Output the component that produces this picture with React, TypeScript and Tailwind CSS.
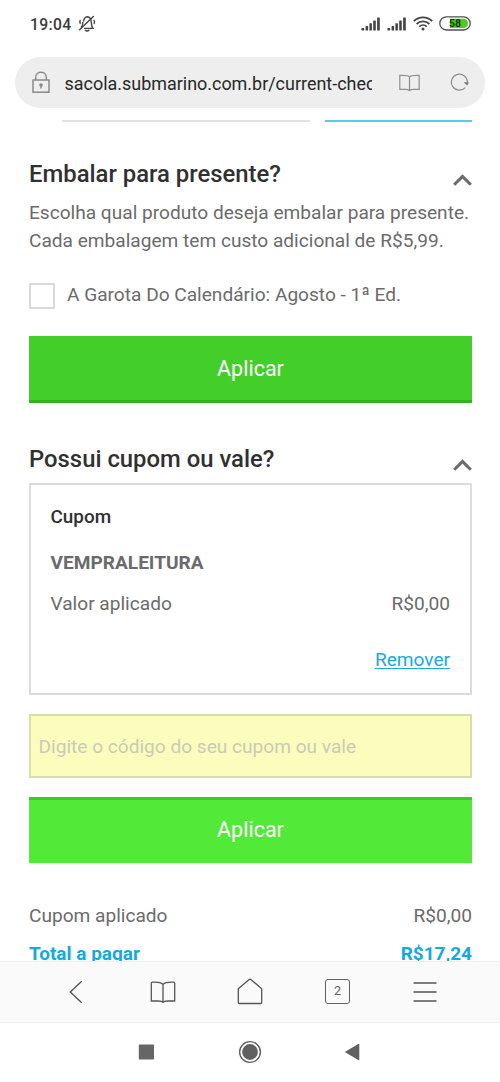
import React from "react";

function MutedBell() {
  return (
    <svg className="h-[18px] w-[18px]" viewBox="0 0 18 18" fill="none" stroke="#454545" strokeWidth="1.4" strokeLinecap="round">
      <path d="M5.6 6C6 3 7 1.9 9.4 1.7C12.4 1.8 13.2 4.6 13.4 8.2C13.6 11 14 12.2 15 13.4H6.6" />
      <path d="M15.4 1.6L1.6 14.8" />
      <path d="M4.8 7.5C4.8 9.6 4.4 10.8 3.4 12" />
      <path d="M7.3 15.3C8.2 16.2 10 16.2 10.9 15.3" />
      <path d="M2.2 5.4C1.7 6.4 1.7 7.4 2.2 8.4M16 5.4C16.7 6.4 16.7 7.4 16.2 8.6" />
    </svg>
  );
}

function Signal() {
  return (
    <svg className="h-[14px] w-[20px]" viewBox="0 0 20 14" fill="#454545">
      <rect x="0.3" y="11" width="3" height="2.4" rx="0.8" />
      <rect x="4.6" y="9" width="2.5" height="4.4" rx="0.5" />
      <rect x="8.4" y="6.2" width="2.5" height="7.2" rx="0.5" />
      <rect x="12.2" y="3.4" width="2.6" height="10" rx="0.5" />
      <rect x="16.1" y="0.5" width="2.7" height="12.9" rx="0.5" />
    </svg>
  );
}

function Wifi() {
  return (
    <svg className="h-[15px] w-[20px]" viewBox="0 0 20 15" fill="none" stroke="#454545" strokeWidth="1.8">
      <path d="M0.8 5.2C6 0 14 0 19.2 5.2" />
      <path d="M3.6 8C7.2 4.5 12.8 4.5 16.4 8" />
      <path d="M6.3 10.6C8.4 8.7 11.6 8.7 13.7 10.6" />
      <circle cx="10" cy="13" r="1.5" fill="#454545" stroke="none" />
    </svg>
  );
}

function Battery() {
  return (
    <svg className="h-[15px] w-[32px]" viewBox="0 0 32 15">
      <rect x="0.8" y="0.8" width="30.4" height="13.2" rx="6.6" fill="#fff" stroke="#505050" strokeWidth="1.3" />
      <path d="M11 2.7H24.3A4.7 4.7 0 0 1 24.3 12.1H11Z" fill="#4fcb21" />
      <text x="16" y="11.2" textAnchor="middle" className="font-['Roboto',sans-serif] text-[10.5px] font-bold" fill="#143d08">58</text>
    </svg>
  );
}

function Lock() {
  return (
    <svg className="h-[23px] w-[18px]" viewBox="0 0 18 23" fill="none" stroke="#8b8b8b" strokeWidth="1.5">
      <rect x="1" y="9" width="16" height="12.2" />
      <path d="M3.7 9V6.5C3.7 -0.4 14.3 -0.4 14.3 6.5V9" />
      <circle cx="9" cy="14" r="1.8" fill="#8b8b8b" stroke="none" />
      <path d="M9 14V17.5" />
    </svg>
  );
}

function AddressBook() {
  return (
    <svg className="h-[18px] w-[21px]" viewBox="0 0 21 18" fill="none" stroke="#8f8f8f" strokeWidth="1.2">
      <path d="M10.5 3C9 1 6 1.2 0.8 1.4V15.3H6.3C8.4 15.3 9.5 15.6 10.5 16.6C11.5 15.6 12.6 15.3 14.7 15.3H20.2V1.4C15 1.2 12 1 10.5 3ZM10.5 3V16.6" />
    </svg>
  );
}

function Reload() {
  return (
    <svg className="h-[19px] w-[19px]" viewBox="0 0 19 19" fill="none" stroke="#8f8f8f" strokeWidth="1.2">
      <path d="M15.3 14.6A8 8 0 1 1 17.4 9.6" />
      <path d="M13.6 9.2H18.8L17.4 12.6Z" fill="#777" stroke="none" />
    </svg>
  );
}

function Chevron() {
  return (
    <svg className="h-[12px] w-[19px]" viewBox="0 0 19 12" fill="none" stroke="#6b6b6b" strokeWidth="3">
      <path d="M1.2 10.7L9.5 2.4L17.8 10.7" />
    </svg>
  );
}

function StatusBar() {
  return (
    <header className="flex h-[57px] shrink-0 items-start pr-[29.5px] pl-[30px]">
      <span className="mt-[12.5px] w-[48px] text-[15.7px] leading-6 font-medium tracking-[0.35px] text-[#3b3b3b]">19:04</span>
      <span className="mt-[15px]"><MutedBell /></span>
      <div className="ml-auto flex">
        <span className="mt-[17px] mr-[6px]"><Signal /></span>
        <span className="mt-[17px] mr-[6px]"><Signal /></span>
        <span className="mt-[16px] mr-[6px]"><Wifi /></span>
        <span className="mt-[16px]"><Battery /></span>
      </div>
    </header>
  );
}

function AddressBar() {
  return (
    <div className="mx-[15px] flex h-[51px] shrink-0 items-center rounded-full bg-[#eee] pr-[16px] pl-[17px]">
      <Lock />
      <span className="ml-[14.5px] w-[307.5px] overflow-hidden pt-[2px] text-[17.95px] leading-7 whitespace-nowrap text-[#282828]">
        sacola.submarino.com.br/current-checkout
      </span>
      <span className="ml-[27px]"><AddressBook /></span>
      <span className="ml-[30px]"><Reload /></span>
    </div>
  );
}

function SectionTitle({ children }: { children: React.ReactNode }) {
  return (
    <div className="flex h-8 items-start justify-between">
      <h2 className="text-[23.85px] leading-8 font-medium text-[#303030]">{children}</h2>
      <span className="mt-[16px]"><Chevron /></span>
    </div>
  );
}

function Toolbar() {
  return (
    <nav className="flex h-[62px] shrink-0 items-center border-y border-[#efefef] bg-[#fafafa] pb-px pl-[69px]">
      <svg className="h-[24px] w-[14px]" viewBox="0 0 14 24" fill="none" stroke="#555" strokeWidth="1.4">
        <path d="M12.7 1.2L1.3 12L12.7 22.8" />
      </svg>
      <svg className="ml-[67px] h-[24px] w-[26px]" viewBox="0 0 26 24" fill="none" stroke="#555" strokeWidth="1.3">
        <path d="M13 4.3C10.8 1.7 7 1.9 2.5 2.1Q1.3 2.2 1.3 3.2V21H8.5C10.6 21 12 21.3 13 22.4C14 21.3 15.4 21 17.5 21H24.7V3.2Q24.7 2.2 23.5 2.1C19 1.9 15.2 1.7 13 4.3ZM13 4.3V22.4" />
      </svg>
      <svg className="ml-[61px] h-[27px] w-[26px]" viewBox="0 0 26 27" fill="none" stroke="#555" strokeWidth="1.3">
        <path d="M1.3 10.8L11.8 1.7Q13 0.8 14.2 1.7L24.7 10.8V24.5Q24.7 25.5 23.7 25.5H2.3Q1.3 25.5 1.3 24.5Z" />
      </svg>
      <span className="ml-[62px] flex h-[25px] w-[25px] items-center justify-center rounded-[3px] border-[1.5px] border-[#606060] text-[12.5px] leading-none text-[#606060]">2</span>
      <svg className="ml-[63px] h-[22px] w-[24px]" viewBox="0 0 24 22" stroke="#555" strokeWidth="1.5">
        <path d="M0.5 2H23.5M0.5 11H23.5M0.5 20H23.5" />
      </svg>
    </nav>
  );
}

function SystemNav() {
  return (
    <footer className="flex h-[59px] shrink-0 items-center justify-between bg-white pr-[140px] pb-px pl-[138px]">
      <svg className="h-[24px] w-[17px]" viewBox="0 0 17 24"><rect x="0.8" y="4.5" width="15.2" height="15" rx="0.7" fill="#666" /></svg>
      <svg className="h-[24px] w-[24px]" viewBox="0 0 24 24"><circle cx="12" cy="12" r="10.4" fill="none" stroke="#606060" strokeWidth="1.4" /><circle cx="12" cy="12" r="7.9" fill="#606060" /></svg>
      <svg className="h-[24px] w-[16px]" viewBox="0 0 16 24"><path d="M0.8 12L14.6 3.8Q15.3 3.6 15.3 4.4V19.6Q15.3 20.4 14.6 20.2Z" fill="#606060" /></svg>
    </footer>
  );
}

export default function App() {
  return (
    <div className="flex h-[1082px] w-[500px] flex-col overflow-hidden bg-white font-['Roboto',sans-serif] text-[19.1px] text-[#6b6b6b]">
      <StatusBar />
      <AddressBar />
      <main className="flex h-[853px] shrink-0 flex-col overflow-hidden pr-[28px] pl-[29px] whitespace-nowrap">
        <div className="mt-[12px] flex h-[2px] shrink-0 justify-between pl-[33px]">
          <div className="w-[248px] bg-[#e2e2e2]" />
          <div className="w-[147px] bg-[#5bc8ed]" />
        </div>
        <div className="mt-[36px]"><SectionTitle>Embalar para presente?</SectionTitle></div>
        <p className="mt-[9px] leading-7">
          Escolha qual produto deseja embalar para presente.<br />
          Cada embalagem tem custo adicional de R$5,99.
        </p>
        <label className="mt-[28px] flex h-[26px] shrink-0 items-center">
          <span className="h-[26px] w-[26px] border-2 border-[#dadada]" />
          <span className="ml-[12px] pb-[2px] leading-7">A Garota Do Calendário: Agosto - 1ª Ed.</span>
        </label>
        <button className="mt-[27px] h-[67px] shrink-0 border-b-[3px] border-[#31b31e] bg-[#43ce2a] pt-[2px] text-[21.5px] text-white">Aplicar</button>
        <div className="mt-[40px]"><SectionTitle>Possui cupom ou vale?</SectionTitle></div>
        <section className="mt-[8px] flex h-[212px] shrink-0 flex-col border-2 border-[#dcdcdc] pr-[20px] pl-[19.5px] leading-7">
          <h3 className="mt-[18px] text-[18.9px] font-medium text-[#303030]">Cupom</h3>
          <strong className="mt-[18px] font-bold">VEMPRALEITURA</strong>
          <div className="mt-[13px] flex justify-between"><span>Valor aplicado</span><span>R$0,00</span></div>
          <a className="mt-[28px] self-end text-[#1ba9e1] underline decoration-1 underline-offset-2">Remover</a>
        </section>
        <input
          className="mt-[19px] h-[64px] shrink-0 border-2 border-[#d9dbb4] bg-[#fbfdbd] px-[7.5px] placeholder:text-[#c9cbb8] placeholder:opacity-100"
          placeholder="Digite o código do seu cupom ou vale"
        />
        <button className="mt-[19px] h-[66px] shrink-0 border-t-[3px] border-[#43c62f] bg-[#53e938] pb-[3px] text-[21.5px] text-white">Aplicar</button>
        <div className="mt-[39px] flex shrink-0 justify-between leading-7"><span>Cupom aplicado</span><span>R$0,00</span></div>
        <div className="mt-[10px] flex shrink-0 justify-between text-[19px] leading-7 font-bold text-[#16a9e1]"><span>Total a pagar</span><span>R$17,24</span></div>
      </main>
      <Toolbar />
      <SystemNav />
    </div>
  );
}
